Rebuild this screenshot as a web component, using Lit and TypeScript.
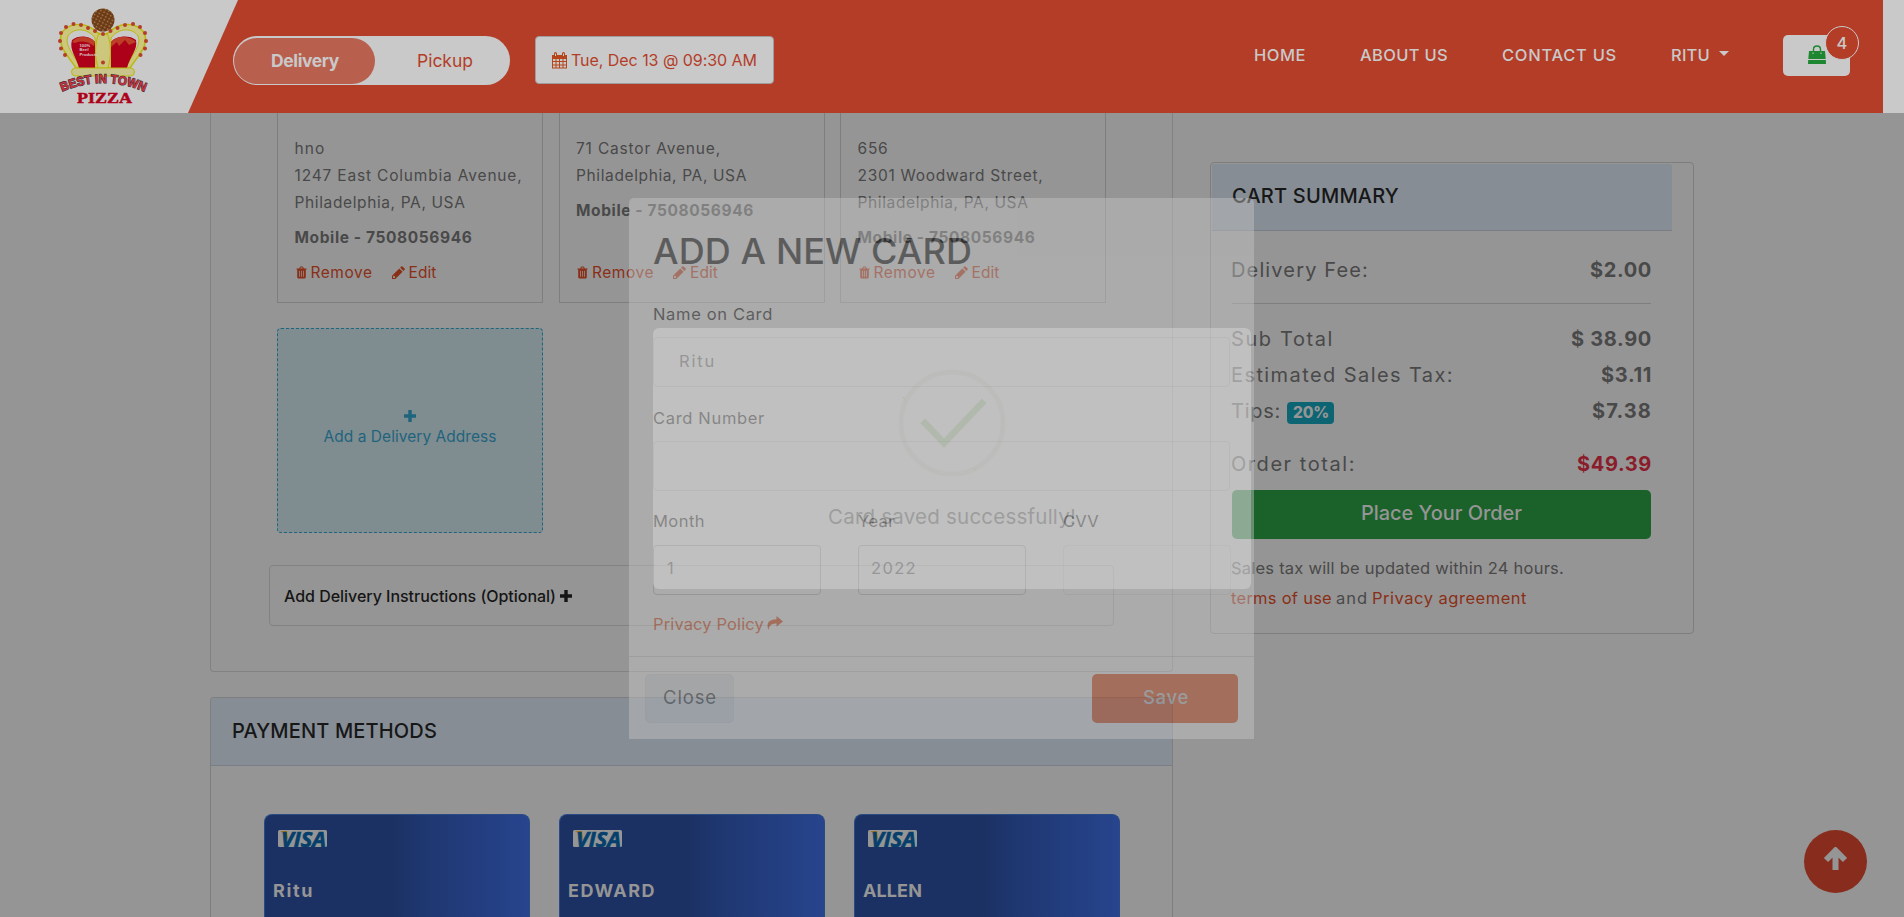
import { LitElement, html, css, svg } from "lit";
import { customElement, property } from "lit/decorators.js";

/* One line of text whose tracking is computed so that it fills a given measure. */
@customElement("fit-text")
class FitText extends LitElement {
  static styles = css`
    :host { display: inline-block; white-space: nowrap; flex: none; margin-left: -1px; }
    .t { display: inline-block; white-space: pre; }
  `;
  @property({ type: Number }) w = 0;
  @property() text = "";
  firstUpdated() {
    const el = this.renderRoot.querySelector(".t") as HTMLElement;
    el.style.letterSpacing = "0px";
    const natural = el.getBoundingClientRect().width;
    const gap = (this.w + 2 - natural) / Math.max(1, this.text.length);
    el.style.letterSpacing = gap.toFixed(3) + "px";
    this.style.width = this.w + 1 + "px";
  }
  render() {
    return html`<span class="t">${this.text}</span>`;
  }
}

const t = (text: string, w: number) => html`<fit-text .text=${text} .w=${w}></fit-text>`;

const trash = html`<svg class="ic-trash" viewBox="0 0 12 13"><path fill="currentColor" fill-rule="evenodd" d="M3.5 2 4.2.5Q4.5 0 5 0H7Q7.500 0 7.800.5L8.500 2H11.500V3.200H10.700V11.500Q10.700 13 9.500 13H2.500Q1.300 13 1.300 11.500V3.200H.5V2ZM4.700 2H7.300L6.900 1H5.100ZM3.300 4.500V11H4.100V4.500ZM5.600 4.500V11H6.400V4.500ZM7.900 4.500V11H8.700V4.500Z"/></svg>`;
const pencil = html`<svg class="ic-pencil" viewBox="0 0 13 13"><path fill="currentColor" fill-rule="evenodd" d="M0 13V9.700L7.300 2.400 10.600 5.700 3.300 13ZM1.100 10.400V11.900H2.600L3.400 11.100 1.900 9.600ZM8.100 1.600 9.300.4Q9.900-.1 10.500.4L12.600 2.500Q13.100 3.100 12.600 3.700L11.400 4.900Z"/></svg>`;
const plus = html`<svg class="ic-plus" viewBox="0 0 12 12"><path fill="currentColor" d="M4.300 0H7.700V4.300H12V7.700H7.700V12H4.300V7.700H0V4.300H4.300Z"/></svg>`;

const beads = [
  [66, 27], [73.500, 24], [81, 25], [88, 28], [95, 31], [61, 33], [60, 41], [61, 48.500], [65, 55], [103, 34],
  [140, 27], [133, 24], [125, 25], [117.500, 28], [110.500, 31], [145, 33], [146, 41], [145, 48.500], [140.500, 55], [103, 62.500],
];

const logo = html`<svg class="logo" viewBox="50 0 110 113">
  <defs>
    <pattern id="bead" width="3.700" height="3.300" patternUnits="userSpaceOnUse" patternTransform="rotate(28)">
      <rect width="4" height="4" fill="#6a3a18"/><circle cx="1.500" cy="1.500" r=".9" fill="#a5793f"/>
    </pattern>
    <path id="arc" d="M62 91.500Q103 74.500 144 91.500"/>
  </defs>
  <circle cx="103" cy="20" r="11.500" fill="url(#bead)"/>
  <path d="M76 68C69 57 58 47 61 35 65 24 84 19 98 33L103 35 108 33C122 19 141 24 145 35 148 47 137 57 130 68Z" fill="#ccc77c" stroke="#b9b80e" stroke-width="1.500"/>
  <path d="M80 68C75 55 64 46 68 36 73 28 87 27 95 38V68ZM126 68C131 55 142 46 138 36 133 28 119 27 111 38V68Z" fill="#c9c9c9" stroke="#b9b80e"/>
  <path d="M79 68C76 56 69 50 72 40 79 34 91 36 95 42V68Z" fill="#ad0019"/>
  <path d="M127 68C130 56 138 50 136 40 129 34 115 36 111 42V68Z" fill="#ad0019"/>
  <path d="M72 42C77 35 90 36 95 42L94 46Q84 39 75 43ZM136 42C129 35 116 36 111 42V47L117 42 119 46 125 40 129 45Z" fill="#bd3f28"/>
  <path d="M98 35Q103 32 108 35Q113 51 108 68H98Q93 51 98 35Z" fill="#ccc77c" stroke="#b9b80e"/>
  <rect x="71.500" y="68" width="63" height="8" rx="4" fill="#c9c58a" stroke="#b9b80e"/>
  ${beads.map(([x, y]) => svg`<circle cx=${x} cy=${y} r="2" fill="#b43d28"/>`)}
  <g class="logo-tiny"><text x="79.500" y="46.500">100%</text><text x="79.500" y="51">Beef</text><text x="79.500" y="55.500">Products</text></g>
  <text class="logo-arc" textLength="85" lengthAdjust="spacingAndGlyphs"><textPath href="#arc">BEST IN TOWN</textPath></text>
  <text class="logo-pizza" x="77" y="102.500" textLength="55" lengthAdjust="spacingAndGlyphs">PIZZA</text>
</svg>`;

const addresses = [
  { lines: [["hno", 29], ["1247 East Columbia Avenue,", 226], ["Philadelphia, PA, USA", 169]] },
  { lines: [["71 Castor Avenue,", 143], ["Philadelphia, PA, USA", 169]] },
  { lines: [["656", 29], ["2301 Woodward Street,", 184], ["Philadelphia, PA, USA", 169]] },
] as { lines: [string, number][] }[];

const holders: [string, number][] = [["Ritu", 39], ["EDWARD", 86], ["ALLEN", 57]];

@customElement("app-root")
class AppRoot extends LitElement {
  static styles = css`
    * { box-sizing: border-box; }
    :host { display: block; position: relative; width: 1904px; height: 917px; overflow: hidden;
      background: #959595; color: #494949; font-family: Inter, "Open Sans", sans-serif; font-size: 15.500px; }
    svg { display: block; flex: none; }
    b { font-weight: 700; display: inline-block; }

    .header { height: 113px; display: flex; background: #c9c9c9; color: #c9c9c9; }
    .bar { width: 1883px; height: 113px; display: flex; align-items: flex-start;
      background: linear-gradient(#b43d28, #b43d28) 238px 0 / 100% 100% no-repeat; }
    .brand { width: 238px; height: 113px; flex: none; position: relative; }
    .brand .logo { width: 110px; height: 113px; margin-left: 50px; }
    .brand .slant { position: absolute; left: 188px; top: 0; width: 51px; height: 113px; }
    .logo-tiny { font: 700 4.200px "Liberation Sans", sans-serif; fill: #d8c9c9; }
    .logo-arc { font: 700 12.500px "Liberation Sans", sans-serif; fill: #c8303f; stroke: #3a2a2c; stroke-width: 1.100px; paint-order: stroke; }
    .logo-pizza { font: 700 15.500px "Liberation Serif", serif; fill: #ad0019; stroke: #ad0019; stroke-width: .5px; }

    .switch { margin: 36px 0 0 -5px; width: 277px; height: 49px; padding: 1.500px 1px; border-radius: 25px; display: flex;
      background: #c9c9c9; position: relative; font-size: 17.500px; line-height: 46px; }
    .switch .on { width: 141px; height: 46px; border-radius: 23px; background: #b95f4e; font-weight: 700; padding-left: 38px; }
    .switch .off { color: #b43d28; padding-left: 43px; }
    .when { margin: 36px 0 0 25px; width: 239px; height: 48px; border: 1px solid #9d9d9d; border-radius: 4px; background: #c9c9c9;
      color: #b43d28; display: flex; align-items: center; padding-left: 16px; gap: 5px; font-size: 16px; }
    .cal { width: 15px; height: 17px; }
    .nav { margin: 35px 0 0 481px; height: 41px; display: flex; align-items: center; font-size: 16.500px; font-weight: 500; }
    .nav > fit-text { margin-top: -2px; }
    .nav > * + fit-text { margin-left: 55px; }
    .caret { border: 5px solid transparent; border-top-color: currentColor; border-bottom: 0; margin: -4px 0 0 10px; }
    .cart { margin-left: 54px; width: 67px; height: 41px; border-radius: 5px; background: #c9c9c9; color: #1d8631; position: relative; padding: 10px 0 0 25px; }
    .bag { width: 18px; height: 19px; }
    .count { position: absolute; left: 42px; top: -9px; width: 34px; height: 34px; border: 1px solid #c9c9c9; border-radius: 50%;
      background: #b43d28; color: #c9c9c9; text-align: center; line-height: 32px; }

    .main { display: flex; align-items: flex-start; padding-left: 210px; height: 804px; }
    .left { width: 963px; flex: none; }
    .panel { height: 559px; border: 1px solid #828282; border-top: 0; border-radius: 0 0 4px 4px; }
    .row { display: flex; gap: 15.500px; padding-left: 66px; }
    .addr { width: 266px; height: 190px; border: 1px solid #7e7e7e; border-top: 0; padding: 22px 0 0 17.500px; display: flex; flex-direction: column; line-height: 27px; }
    .addr .mob { font-weight: 700; margin-top: 8px; }
    .acts { display: flex; align-items: center; margin-top: auto; margin-bottom: 16px; color: #8a2f17; }
    .ic-trash { width: 11px; height: 13px; margin-right: 5px; }
    .ic-pencil { width: 13px; height: 13px; margin: 0 5px 0 20px; }
    .ic-plus { width: 12px; height: 12px; }
    .new { margin: 25px 0 0 66px; width: 266px; height: 205px; border: 1px dashed #1d667e; border-radius: 4px; background: #7f8c90; color: #1f647d;
      display: flex; flex-direction: column; align-items: center; padding-top: 81px; line-height: 20px; }
    .new .ic-plus { margin-bottom: 5px; }
    .instr { margin: 32px 0 0 58px; width: 845px; height: 61px; border: 1px solid #828282; border-radius: 4px; display: flex; align-items: center;
      padding: 1px 0 0 15px; gap: 5px; color: #151515; font-size: 16px; font-weight: 500; }
    .pay { margin-top: 25px; height: 220px; border: 1px solid #7e7e7e; border-bottom: 0; border-radius: 4px 4px 0 0; }
    .head { background: #868d95; border-bottom: 1px solid #787d86; color: #171717; font-weight: 500; font-size: 20px; display: flex; align-items: center; }
    .pay .head { height: 68px; padding: 0 0 1px 22px; border-radius: 3px 3px 0 0; }
    .cards { display: flex; gap: 29.500px; padding: 48px 0 0 53px; }
    .card { width: 265.500px; height: 103px; border: 1px solid #294a84; border-bottom: 0; border-radius: 8px 8px 0 0; background: linear-gradient(90deg, #1b3163 0 48%, #1f3872 62%, #27448d 100%);
      padding: 15px 0 0 13px; color: #959595; font-weight: 700; font-size: 18px; }
    .card fit-text { display: block; margin: 32px 0 0 -5px; line-height: 24px; }
    .visa { width: 49px; height: 17px; }
    .visa text { font: italic 700 22px "Open Sans", sans-serif; fill: #063f6c; stroke: #063f6c; stroke-width: .7px; }

    .summary { margin: 49px 0 0 37px; width: 484px; height: 472px; border: 1px solid #7e7e7e; border-radius: 4px; font-size: 20px; }
    .summary .head { width: 460px; height: 67px; margin: 1px 0 0 1px; padding: 0 0 2px 21px; border-radius: 3px 3px 0 0; }
    .lines { width: 419px; margin-left: 21px; }
    .line { display: flex; justify-content: space-between; align-items: center; height: 36px; }
    .line b { margin-right: 0; }
    .fee { height: 73px; padding-top: 6px; border-bottom: 1px solid #7f7f7f; margin-bottom: 17px; }
    .tips { display: flex; align-items: center; }
    .pct { margin: 4px 0 0 7px; width: 47px; height: 22px; border-radius: 4px; background: #0d6574; color: #959595; font-size: 15.500px; font-weight: 800; line-height: 22px; padding-left: 7px; }
    .total { margin-top: 17px; }
    .total b { color: #8a1d2b; }
    .order { height: 49px; border-radius: 5px; margin-top: 8px; background: #1a612a; color: #959595; text-align: center; line-height: 46px; font-weight: 500; font-size: 20px; }
    .note { margin-top: 14px; font-size: 16.500px; line-height: 30px; display: flex; flex-direction: column; }
    .note .lnk { color: #8a2f17; }
    .note div { display: flex; gap: 6px; }

    .top { position: absolute; left: 1804px; top: 830px; width: 63px; height: 63px; border-radius: 50%; background: #882d1d; color: #959595; padding: 17px 0 0 19px; }
    .top svg { width: 25px; height: 24px; }

    .modal { position: absolute; left: 629px; top: 198px; width: 625px; height: 541px; opacity: .44; background: #c7c7c7; border-radius: 5px 5px 0 0; color: #151515; }
    .body { height: 458px; padding: 33px 0 0 25px; font-size: 16.500px; }
    .title { font-size: 36px; font-weight: 500; line-height: 40px; height: 40px; display: flex; }
    .lab { display: flex; height: 24px; line-height: 24px; }
    .l1 { margin-top: 31px; }
    .l2 { margin-top: 19px; }
    .inp { width: 577px; height: 50px; border: 1px solid #b2b2b2; border-radius: 4px; margin: 11px 0 0 -1px; line-height: 47px; padding-left: 26px; color: #4a4a4a; }
    .trio { display: flex; gap: 38px; margin-top: 18px; }
    .trio .inp { width: 168px; margin-top: 12px; border-color: #989898; padding-left: 13px; line-height: 44px; }
    .trio .faint { border-color: #b8b8b8; }
    .priv { display: flex; align-items: center; gap: 4px; color: #b63f16; margin-top: 17px; line-height: 24px; }
    .share { width: 16px; height: 14px; margin-top: -3px; }
    .foot { border-top: 1px solid #ababab; height: 83px; display: flex; justify-content: space-between; align-items: flex-start; padding: 17px 16px 0; font-size: 18.500px; line-height: 46px; }
    .close { width: 89px; height: 49px; border-radius: 5px; background: #b7babd; border: 1px solid #b5b5b8; padding-left: 18px; line-height: 44px; color: #303538; }
    .save { width: 146px; height: 49px; border-radius: 5px; background: #b63f16; color: #a4a4a4; padding-left: 52px; font-weight: 500; }

    .toast { position: absolute; left: 653px; top: 328px; width: 598px; height: 261px; border-radius: 6px; background: #fff; opacity: .25; color: #757575;
      display: flex; flex-direction: column; align-items: center; padding-top: 39px; font-size: 20.500px; line-height: 28px; }
    .ok { width: 112px; height: 112px; margin-bottom: 24px; }
  `;

  render() {
    return html`
      <div class="header">
        <div class="bar">
          <div class="brand">${logo}
            <svg class="slant" viewBox="0 0 51 113"><path d="M50 0H51V113H0Z" fill="#b43d28"/></svg>
          </div>
          <div class="switch"><div class="on">${t("Delivery", 66)}</div><div class="off">${t("Pickup", 54)}</div></div>
          <div class="when">
            <svg class="cal" viewBox="0 0 15 17"><path fill="#b5461c" fill-rule="evenodd" d="M0 3H2V1.500Q2 0 3.500 0T5 1.500V3H10V1.500Q10 0 11.500 0T13 1.500V3H15V16.500H0ZM1 7V9H3.500V7ZM4.500 7V9H7V7ZM8 7V9H10.500V7ZM11.500 7V9H14V7ZM1 10V12.500H3.500V10ZM4.500 10V12.500H7V10ZM8 10V12.500H10.500V10ZM11.500 10V12.500H14V10ZM1 13.500V15.500H3.500V13.500ZM4.500 13.500V15.500H7V13.500ZM8 13.500V15.500H10.500V13.500ZM11.500 13.500V15.500H14V13.500ZM3 1.500V4H4V1.500ZM11 1.500V4H12V1.500Z"/></svg>
            ${t("Tue, Dec 13 @ 09:30 AM", 184)}
          </div>
          <div class="nav">
            ${t("HOME", 50)}${t("ABOUT US", 86)}${t("CONTACT US", 113)}${t("RITU", 37)}<span class="caret"></span>
            <div class="cart">
              <svg class="bag" viewBox="0 0 18 19"><path fill="currentColor" d="M1 6H17L17.700 14H.3ZM.2 15H17.800L18 19H0Z"/><path d="M5.500 9V4.500Q5.500 1 9 1T12.500 4.500V9" fill="none" stroke="currentColor" stroke-width="1.400"/><path d="M5 7.500V9M13 7.500V9" stroke="#c9c9c9"/></svg>
              <div class="count">4</div>
            </div>
          </div>
        </div>
      </div>

      <div class="main">
        <div class="left">
          <div class="panel">
            <div class="row">
              ${addresses.map((a) => html`<div class="addr">
                ${a.lines.map(([s, w]) => t(s, w))}
                <div class="mob">${t("Mobile - 7508056946", 176)}</div>
                <div class="acts">${trash}${t("Remove", 60)}${pencil}${t("Edit", 26)}</div>
              </div>`)}
            </div>
            <div class="new">${plus}${t("Add a Delivery Address", 171)}</div>
            <div class="instr">${t("Add Delivery Instructions (Optional)", 270)}${plus}</div>
          </div>
          <div class="pay">
            <div class="head">${t("PAYMENT METHODS", 203)}</div>
            <div class="cards">
              ${holders.map(([s, w]) => html`<div class="card">
                <svg class="visa" viewBox="0 0 49 17"><rect width="49" height="17" rx="1.500" fill="#959595"/><path d="M2 1H9L10 10Q7 4 2 1Z" fill="#a8741c"/><text x="3" y="16.500" textLength="45" lengthAdjust="spacingAndGlyphs">VISA</text></svg>
                ${t(s, w)}
              </div>`)}
            </div>
          </div>
        </div>

        <div class="summary">
          <div class="head">${t("CART SUMMARY", 165)}</div>
          <div class="lines">
            <div class="line fee">${t("Delivery Fee:", 136)}<b>${t("$2.00", 60)}</b></div>
            <div class="line">${t("Sub Total", 101)}<b>${t("$ 38.90", 79)}</b></div>
            <div class="line">${t("Estimated Sales Tax:", 221)}<b>${t("$3.11", 49)}</b></div>
            <div class="line"><div class="tips">${t("Tips:", 48)}<div class="pct">${t("20%", 34)}</div></div><b>${t("$7.38", 58)}</b></div>
            <div class="line total">${t("Order total:", 123)}<b>${t("$49.39", 73)}</b></div>
            <div class="order">${t("Place Your Order", 159)}</div>
            <div class="note">${t("Sales tax will be updated within 24 hours.", 331)}
              <div><span class="lnk">${t("terms of use", 99)}</span>${t("and", 30)}<span class="lnk">${t("Privacy agreement", 153)}</span></div>
            </div>
          </div>
        </div>
      </div>

      <div class="top"><svg viewBox="0 0 25 24"><path d="M3 13 12.500 3.500 22 13M12.500 4V23" fill="none" stroke="currentColor" stroke-width="6"/></svg></div>

      <div class="modal">
        <div class="body">
          <div class="title">${t("ADD A NEW CARD", 317)}</div>
          <div class="lab l1">${t("Name on Card", 118)}</div>
          <div class="inp">${t("Ritu", 35)}</div>
          <div class="lab l2">${t("Card Number", 110)}</div>
          <div class="inp">&nbsp;</div>
          <div class="trio">
            <div><div class="lab">${t("Month", 50)}</div><div class="inp">1</div></div>
            <div><div class="lab">${t("Year", 35)}</div><div class="inp">${t("2022", 44)}</div></div>
            <div><div class="lab">${t("CVV", 34)}</div><div class="inp faint"></div></div>
          </div>
          <div class="priv">${t("Privacy Policy", 109)}<svg class="share" viewBox="0 0 16 14"><path fill="currentColor" d="M9.500 0 16 5.500 9.500 10.500V7.500Q2 7 1.500 14-2.500 3.500 9.500 3.200Z"/></svg></div>
        </div>
        <div class="foot"><div class="close">${t("Close", 52)}</div><div class="save">${t("Save", 44)}</div></div>
      </div>

      <div class="toast">
        <svg class="ok" viewBox="0 0 112 112">
          <circle cx="56" cy="56" r="51" fill="none" stroke="#eef4ea" stroke-width="5"/>
          <path d="M29 56 48 76 86 36" fill="none" stroke="#c4e3b4" stroke-width="6.500" stroke-linecap="square"/>
          <path d="M7 30 10 34M78 101 80 104" stroke="#bfe6ac"/>
        </svg>
        ${t("Card saved successfully!", 246)}
      </div>
    `;
  }
}
